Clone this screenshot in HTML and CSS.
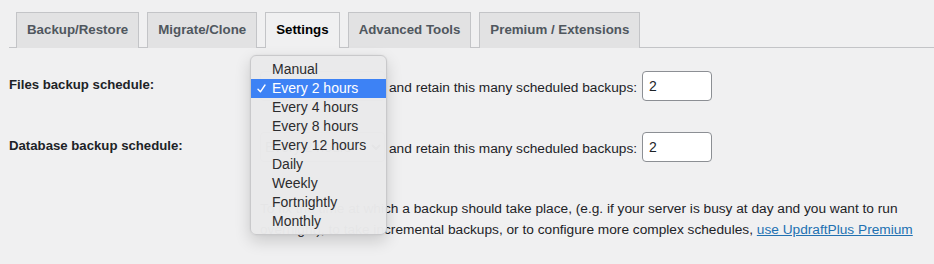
FILE: index.html
```html
<!DOCTYPE html>
<html lang="en">
<head>
<meta charset="utf-8">
<title>UpdraftPlus Settings</title>
<link rel="stylesheet" href="styles.css">
</head>
<body>
<div class="page">
  <nav class="tabs">
    <a class="tab">Backup/Restore</a>
    <a class="tab">Migrate/Clone</a>
    <a class="tab tab-active">Settings</a>
    <a class="tab">Advanced Tools</a>
    <a class="tab">Premium / Extensions</a>
  </nav>

  <div class="form">
    <div class="row row-1">
      <div class="label">Files backup schedule:</div>
      <div class="field">
        <select class="sched"><option>Every 2 hours</option></select>
        <span class="retain">and retain this many scheduled backups:</span>
        <input class="num" type="text" value="2">
      </div>
    </div>
    <div class="row row-2">
      <div class="label">Database backup schedule:</div>
      <div class="field">
        <select class="sched"><option>Every 2 hours</option></select>
        <span class="retain">and retain this many scheduled backups:</span>
        <input class="num" type="text" value="2">
      </div>
    </div>
    <div class="row row-3">
      <div class="label"></div>
      <p class="note">To fix the time at which a backup should take place, (e.g. if your server is busy at day and you want to run overnight), to take incremental backups, or to configure more complex schedules, <a class="link" href="#">use UpdraftPlus Premium</a></p>
    </div>
  </div>

  <ul class="menu">
    <li class="item">Manual</li>
    <li class="item item-sel"><svg class="check" width="9" height="9" viewBox="0 0 9 9"><path d="M1 5.2 L3.4 7.8 L8 1" fill="none" stroke="#fff" stroke-width="1.4" stroke-linecap="round" stroke-linejoin="round"/></svg>Every 2 hours</li>
    <li class="item">Every 4 hours</li>
    <li class="item">Every 8 hours</li>
    <li class="item">Every 12 hours</li>
    <li class="item">Daily</li>
    <li class="item">Weekly</li>
    <li class="item">Fortnightly</li>
    <li class="item">Monthly</li>
  </ul>
</div>
</body>
</html>
```

FILE: styles.css
```css
html, body {
  margin: 0;
  padding: 0;
  background: #f0f0f1;
}

body {
  font-family: "Liberation Sans", Arial, sans-serif;
  font-size: 13.7px;
  color: #1d2327;
  width: 934px;
  height: 264px;
  overflow: hidden;
}

.page {
  position: relative;
  padding-left: 9px;
  height: 264px;
}

.tabs {
  display: flex;
  gap: 8px;
  padding: 12px 0 0 7px;
  border-bottom: 1px solid #c3c4c7;
  height: 35px;
  box-sizing: content-box;
}

.tab {
  display: block;
  box-sizing: border-box;
  height: 36px;
  padding: 5px 10px;
  border: 1px solid #c3c4c7;
  border-bottom: none;
  background: #e2e2e3;
  color: #50575e;
  font-size: 13.3px;
  font-weight: 700;
  line-height: 24px;
  text-decoration: none;
  white-space: nowrap;
}

.tab-active {
  background: #f0f0f1;
  color: #000;
  position: relative;
  z-index: 1;
}

.form {
  margin-top: 8px;
}

.row {
  display: flex;
  align-items: center;
}

.row-1 {
  height: 60px;
}

.row-2 {
  height: 61px;
}

.label {
  width: 251px;
  flex: none;
  font-weight: 700;
  font-size: 13.2px;
  padding-bottom: 3px;
}

.field {
  display: flex;
  align-items: center;
}

.sched {
  width: 125px;
  height: 30px;
  margin-right: 4px;
  font-family: inherit;
  font-size: 14px;
  border: 1px solid #8c8f94;
  border-radius: 4px;
  background: #fff;
}

.retain {
  padding-top: 3px;
  white-space: nowrap;
}

.num {
  box-sizing: border-box;
  width: 70px;
  height: 30px;
  margin-left: 5px;
  padding: 0 6px;
  border: 1px solid #8c8f94;
  border-radius: 4px;
  background: #fff;
  font-family: inherit;
  font-size: 14px;
  color: #1d2327;
}

.row-3 {
  align-items: flex-start;
  padding-top: 21px;
}

.note {
  margin: 0;
  line-height: 21px;
  width: 662px;
}

.link {
  color: #2271b1;
  text-decoration: underline;
}

.menu {
  position: absolute;
  left: 250px;
  top: 55px;
  width: 137px;
  box-sizing: border-box;
  margin: 0;
  padding: 4px 0 3px;
  list-style: none;
  background: rgba(234, 234, 235, 0.98);
  border: 1px solid #c9c9cb;
  border-radius: 6px;
  box-shadow: 0 6px 16px rgba(0, 0, 0, 0.16), 0 0 2px rgba(0, 0, 0, 0.08);
  z-index: 5;
}

.item {
  position: relative;
  height: 19px;
  line-height: 19px;
  padding-left: 21px;
  font-size: 14px;
  color: #2c2c2e;
  white-space: nowrap;
}

.item-sel {
  background: #3d82f5;
  color: #fff;
}

.check {
  position: absolute;
  left: 6px;
  top: 5px;
}
```
